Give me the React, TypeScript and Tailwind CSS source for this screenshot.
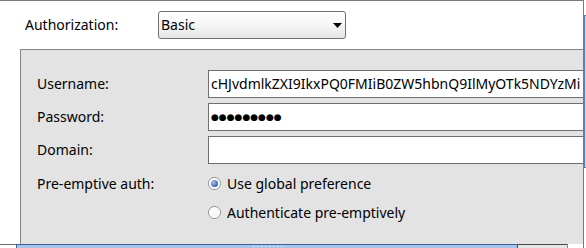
import React from "react";

function Radio({ checked, label }: { checked?: boolean; label: string }) {
  return (
    <div className="flex items-center h-[29px]">
      <span className="relative w-[13px] h-[13px] rounded-full border border-[#8a8a8a] bg-gradient-to-br from-[#d6d6d6] to-white flex items-center justify-center">
        <span className="w-[11px] h-[11px] rounded-full bg-gradient-to-br from-white to-[#f4f4f4] flex items-center justify-center">
          {checked && (
            <span className="w-[7px] h-[7px] rounded-full bg-[radial-gradient(circle_at_35%_35%,#a9c3ef,#3b64b4_70%,#2a4d93)]" />
          )}
        </span>
      </span>
      <span className="ml-[6px] text-black">{label}</span>
    </div>
  );
}

export default function App() {
  return (
    <div className="w-[586px] h-[248px] bg-white overflow-hidden flex text-[14px] text-black font-['Segoe_UI','Noto_Sans','Open_Sans',sans-serif] leading-none">
      {/* main column */}
      <div className="w-[584px] h-[248px] flex flex-col border-r border-[#7a7a7a] border-t">
        {/* authorization row */}
        <div className="h-[48px] flex items-start pt-[10px]">
          <span className="ml-[25px] w-[133px] h-[28px] flex items-center">Authorization:</span>
          <div className="w-[188px] h-[28px] rounded-[3px] border border-[#707070] bg-gradient-to-b from-white via-[#f6f6f6] to-[#e4e4e4] flex items-center justify-between pl-[2px] pr-[3px]">
            <span>Basic</span>
            <svg width="9" height="5" viewBox="0 0 9 5">
              <path d="M0 0h9L4.5 5z" fill="#000" />
            </svg>
          </div>
        </div>
        {/* panel */}
        <div className="ml-[20px] h-[195px] bg-[#e3e3e3] border-l border-t border-[#858585] overflow-hidden pt-[20px] pl-[16px]">
          <div className="grid grid-cols-[171px_400px] gap-y-[5px] items-center">
            <span>Username:</span>
            <div className="h-[28px] bg-white border border-[#707070] flex items-center pl-[2px] whitespace-nowrap">
              cHJvdmlkZXI9IkxPQ0FMIiB0ZW5hbnQ9IlMyOTk5NDYzMi
            </div>
            <span>Password:</span>
            <div className="h-[28px] bg-white border border-[#707070] flex items-center pl-[2px] whitespace-nowrap text-[9px] font-['DejaVu_Sans',sans-serif]">
              ●●●●●●●●●
            </div>
            <span>Domain:</span>
            <div className="h-[28px] bg-white border border-[#707070]" />
            <span className="self-start h-[29px] flex items-center">Pre-emptive auth:</span>
            <div className="flex flex-col">
              <Radio checked label="Use global preference" />
              <Radio label="Authenticate pre-emptively" />
            </div>
          </div>
        </div>
        {/* bottom strip */}
        <div className="h-[4px] flex">
          <div className="w-[16px] border-t border-[#6a6a6a] bg-white" />
          <div className="w-[501px] border-t border-l border-[#3e5f97] bg-[#a9c4ea] relative">
            <div className="absolute left-[236px] top-[1px] w-[30px] h-[1px] bg-[repeating-linear-gradient(90deg,#fff_0_1px,transparent_1px_4px)]" />
          </div>
          <div className="w-[50px] border-t border-l border-[#4a4a4a] bg-[#e6e6e6]" />
          <div className="flex-1 border-l border-[#8a8a8a] bg-white" />
        </div>
      </div>
      {/* right strip */}
      <div className="flex-1 flex flex-col">
        <div className="h-[15px]" />
        <div className="h-[153px] bg-[#c9daf2] border-l border-t border-b border-[#5b7fb8]" />
      </div>
    </div>
  );
}
